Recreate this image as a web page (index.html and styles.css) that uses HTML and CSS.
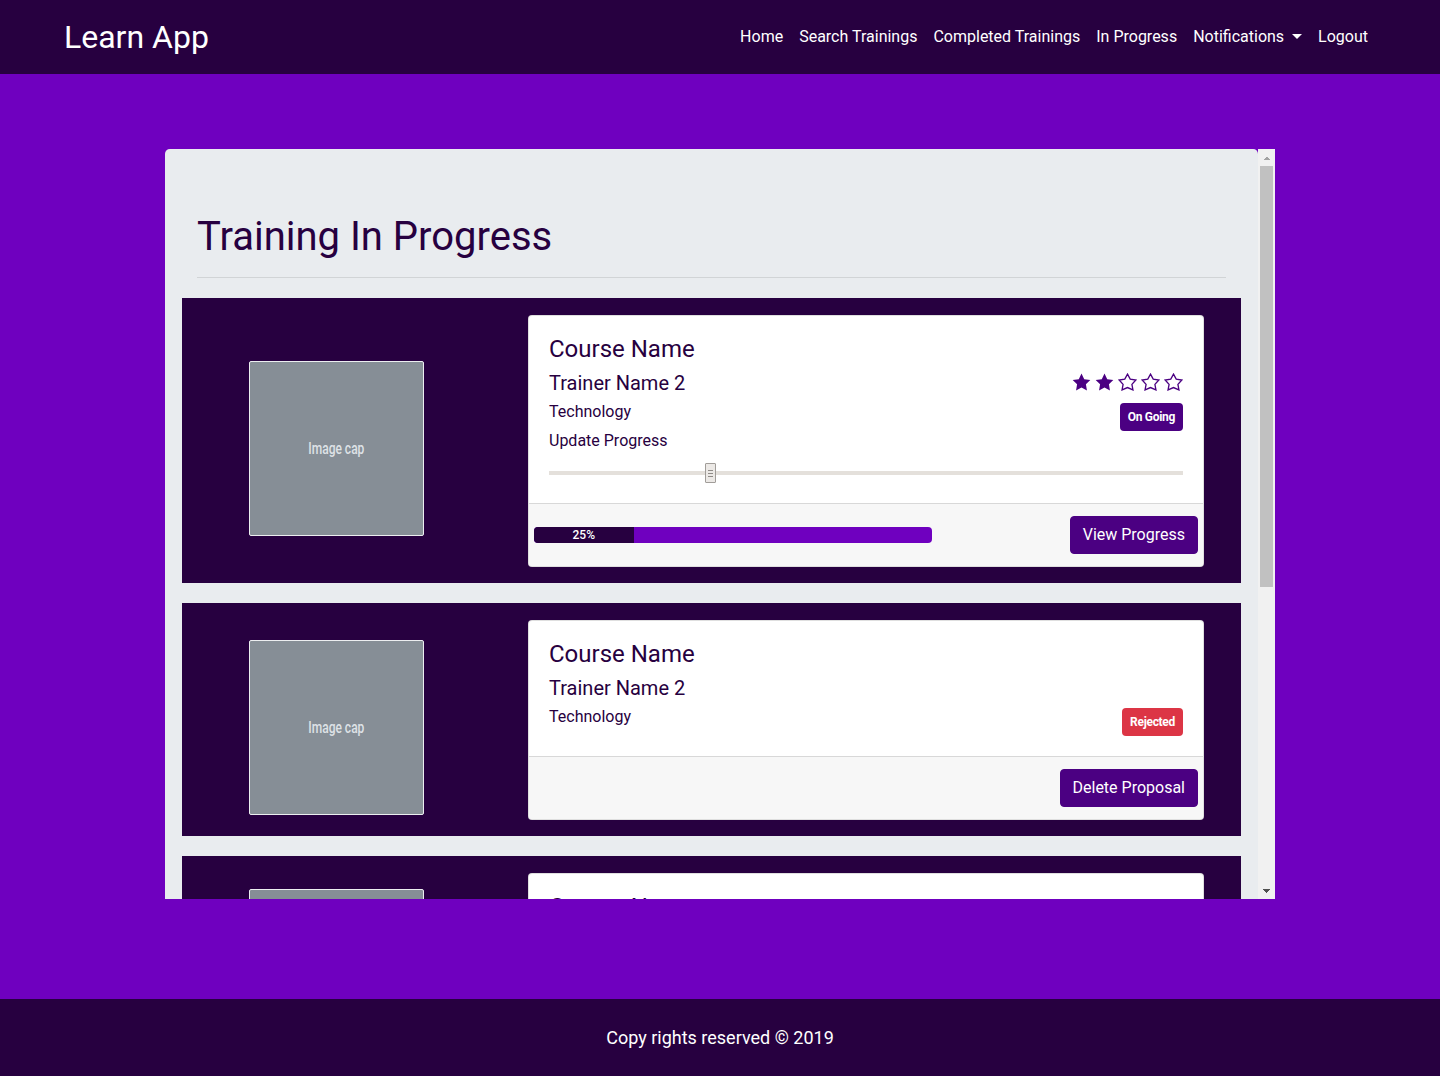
FILE: index.html
```html
<!DOCTYPE html>
<html lang="en">
<head>
<meta charset="utf-8">
<title>Learn App</title>
<link rel="stylesheet" href="styles.css">
</head>
<body>
<header class="navbar">
  <a class="brand" href="#">Learn App</a>
  <nav class="nav">
    <a class="nav-link" href="#">Home</a>
    <a class="nav-link" href="#">Search Trainings</a>
    <a class="nav-link" href="#">Completed Trainings</a>
    <a class="nav-link" href="#">In Progress</a>
    <a class="nav-link dropdown" href="#">Notifications<span class="caret"></span></a>
    <a class="nav-link" href="#">Logout</a>
  </nav>
</header>

<main class="page">
  <div class="scroller">
    <div class="viewport">
      <section class="jumbo">
        <h1 class="title">Training In Progress</h1>
        <hr class="rule">

        <div class="training">
          <div class="thumb-col"><div class="thumb"><span>Image cap</span></div></div>
          <div class="card">
            <div class="card-body">
              <div class="top">
                <div class="info">
                  <h4 class="course">Course Name</h4>
                  <h5 class="trainer">Trainer Name 2</h5>
                  <p class="line">Technology</p>
                  <p class="line">Update Progress</p>
                </div>
                <div class="side">
                  <div class="stars">
                    <svg class="star" viewBox="1.3 1.3 21.4 20.4"><polygon class="full" points="12,2 15.09,8.26 22,9.27 17,14.14 18.18,21.02 12,17.77 5.82,21.02 7,14.14 2,9.27 8.91,8.26"/></svg>
                    <svg class="star" viewBox="1.3 1.3 21.4 20.4"><polygon class="full" points="12,2 15.09,8.26 22,9.27 17,14.14 18.18,21.02 12,17.77 5.82,21.02 7,14.14 2,9.27 8.91,8.26"/></svg>
                    <svg class="star" viewBox="1.3 1.3 21.4 20.4"><polygon class="empty" points="12,2.6 15.09,8.26 21.4,9.27 17,14.14 18.18,20.5 12,17.77 5.82,20.5 7,14.14 2.6,9.27 8.91,8.26"/></svg>
                    <svg class="star" viewBox="1.3 1.3 21.4 20.4"><polygon class="empty" points="12,2.6 15.09,8.26 21.4,9.27 17,14.14 18.18,20.5 12,17.77 5.82,20.5 7,14.14 2.6,9.27 8.91,8.26"/></svg>
                    <svg class="star" viewBox="1.3 1.3 21.4 20.4"><polygon class="empty" points="12,2.6 15.09,8.26 21.4,9.27 17,14.14 18.18,20.5 12,17.77 5.82,20.5 7,14.14 2.6,9.27 8.91,8.26"/></svg>
                  </div>
                  <span class="badge badge-going">On Going</span>
                </div>
              </div>
              <div class="slider">
                <div class="track"></div>
                <div class="knob" style="left:25.5%"><i></i><i></i><i></i></div>
              </div>
            </div>
            <div class="card-footer">
              <div class="progress"><div class="bar" style="width:25%">25%</div></div>
              <button class="btn">View Progress</button>
            </div>
          </div>
        </div>

        <div class="training">
          <div class="thumb-col"><div class="thumb"><span>Image cap</span></div></div>
          <div class="card">
            <div class="card-body">
              <div class="top">
                <div class="info">
                  <h4 class="course">Course Name</h4>
                  <h5 class="trainer">Trainer Name 2</h5>
                  <p class="line">Technology</p>
                </div>
                <div class="side">
                  <div class="stars stars-hidden"></div>
                  <span class="badge badge-rejected">Rejected</span>
                </div>
              </div>
            </div>
            <div class="card-footer footer-end">
              <button class="btn">Delete Proposal</button>
            </div>
          </div>
        </div>

        <div class="training">
          <div class="thumb-col"><div class="thumb"><span>Image cap</span></div></div>
          <div class="card">
            <div class="card-body">
              <div class="top">
                <div class="info">
                  <h4 class="course">Course Name</h4>
                  <h5 class="trainer">Trainer Name 2</h5>
                  <p class="line">Technology</p>
                </div>
                <div class="side">
                  <div class="stars stars-hidden"></div>
                  <span class="badge badge-rejected">Rejected</span>
                </div>
              </div>
            </div>
            <div class="card-footer footer-end">
              <button class="btn btn-sm">Delete Proposal</button>
            </div>
          </div>
        </div>
      </section>
    </div>
    <div class="scrollbar" aria-hidden="true">
      <div class="sb-btn sb-up"></div>
      <div class="sb-track"><div class="sb-thumb"></div></div>
      <div class="sb-btn sb-down"></div>
    </div>
  </div>
</main>

<footer class="footer">Copy rights reserved © 2019</footer>
</body>
</html>
```

FILE: styles.css
```css
* { box-sizing: border-box; }

body {
  margin: 0;
  background: #6f00bf;
  font-family: Roboto, "Liberation Sans", Arial, sans-serif;
  color: #212529;
}

/* ---------- navbar ---------- */
.navbar {
  height: 74px;
  background: #270040;
  display: flex;
  align-items: center;
  justify-content: space-between;
  padding: 0 64px;
}
.brand {
  color: #fff;
  text-decoration: none;
  font-size: 32px;
  line-height: 38px;
  font-weight: 400;
}
.nav { display: flex; align-items: center; }
.nav-link {
  color: #fff;
  text-decoration: none;
  font-size: 16px;
  line-height: 24px;
  padding: 0 8px;
}
.caret {
  display: inline-block;
  margin-left: 8px;
  vertical-align: 3px;
  border-top: 5px solid #fff;
  border-left: 5px solid transparent;
  border-right: 5px solid transparent;
}

/* ---------- page ---------- */
.page { padding: 75px 0 100px; }
.scroller {
  width: 1110px;
  height: 750px;
  margin: 0 auto;
  display: flex;
}
.viewport {
  flex: 1;
  overflow: hidden;
}
.scrollbar {
  width: 17px;
  flex-shrink: 0;
  background: #f1f1f1;
  display: flex;
  flex-direction: column;
}
.sb-btn {
  height: 17px;
  flex-shrink: 0;
  background-repeat: no-repeat;
  background-size: 4px 4px;
}
.sb-up {
  background-image:
    linear-gradient(to top left, #a3a3a3 50%, transparent 50%),
    linear-gradient(to top right, #a3a3a3 50%, transparent 50%);
  background-position: 4.5px 6.5px, 8.5px 6.5px;
}
.sb-down {
  background-image:
    linear-gradient(to bottom left, #505050 50%, transparent 50%),
    linear-gradient(to bottom right, #505050 50%, transparent 50%);
  background-position: 4.5px 6.5px, 8.5px 6.5px;
}
.sb-track { flex: 1; padding: 0 2px; }
.sb-thumb {
  height: 421px;
  background: #c1c1c1;
}

.jumbo {
  background: #e9ecef;
  border-radius: 4.8px;
  padding: 64px 32px 32px;
}
.title {
  margin: 0;
  font-size: 40px;
  line-height: 48px;
  font-weight: 400;
  color: #270040;
}
.rule {
  margin: 16px 0 20px;
  border: 0;
  border-top: 1px solid rgba(0,0,0,.1);
}

/* ---------- training row ---------- */
.training {
  margin: 0 -15px 20px;
  background: #270040;
  display: flex;
  align-items: center;
  padding: 17px 37px 16px 0;
}
.training:last-child { margin-bottom: 0; }
.thumb-col {
  width: 309px;
  margin-right: 37px;
  margin-top: 14px;
  display: flex;
  justify-content: center;
  flex-shrink: 0;
}
.thumb {
  width: 175px;
  height: 175px;
  background: #868e96;
  border: 1px solid #eceef0;
  border-radius: 2px;
  color: #dee2e6;
  display: flex;
  align-items: center;
  justify-content: center;
}
.thumb span {
  display: inline-block;
  font-size: 16px;
  font-weight: 500;
  transform: scaleX(0.75);
}

/* ---------- card ---------- */
.card {
  flex: 1;
  background: #fff;
  border: 1px solid rgba(0,0,0,.125);
  border-radius: 4px;
  display: flex;
  flex-direction: column;
}
.card-body { padding: 20px; }
.top {
  display: flex;
  justify-content: space-between;
  align-items: flex-start;
}
.info { flex: 1; }
.course {
  margin: -1px 0 8px;
  font-size: 24px;
  line-height: 28px;
  font-weight: 400;
  color: #270040;
}
.trainer {
  margin: 0 0 5px;
  font-size: 20px;
  line-height: 24px;
  font-weight: 400;
  color: #270040;
}
.line {
  margin: 0 0 5px;
  font-size: 16px;
  line-height: 24px;
  color: #270040;
}
.info .line:last-child { margin-bottom: 0; }

.slider {
  position: relative;
  height: 20px;
  margin-top: 10px;
}
.track {
  position: absolute;
  left: 0; right: 0; top: 8px;
  height: 4px;
  background: #e4e0db;
}
.knob {
  position: absolute;
  top: 0;
  width: 11px;
  height: 20px;
  margin-left: -6px;
  background: #ece9e6;
  border: 1px solid #a19d99;
  border-radius: 1px;
  display: flex;
  flex-direction: column;
  align-items: center;
  justify-content: center;
  gap: 2px;
}
.knob i {
  display: block;
  width: 5px;
  height: 1px;
  background: #8f8b87;
}

.side {
  display: flex;
  flex-direction: column;
  align-items: flex-end;
  padding-top: 34px;
}
.stars {
  display: flex;
  gap: 4px;
  height: 24px;
  align-items: center;
}
.star { width: 19px; height: 18px; display: block; }
.star .full { fill: #4b0082; }
.star .empty { fill: #fff; stroke: #4b0082; stroke-width: 1.5; stroke-linejoin: miter; }
.stars-hidden { visibility: hidden; width: 111px; }

.badge {
  margin-top: 9px;
  display: inline-block;
  font-size: 12px;
  line-height: 14px;
  font-weight: 700;
  color: #fff;
  padding: 7px 8px;
  border-radius: 4px;
  letter-spacing: -0.3px;
}
.badge-going { background: #4b0082; }
.badge-rejected { background: #dc3545; }

.card-footer {
  background: #f7f7f7;
  border-top: 1px solid rgba(0,0,0,.125);
  border-radius: 0 0 4px 4px;
  padding: 12px 5px;
  display: flex;
  justify-content: space-between;
  align-items: center;
}
.footer-end { justify-content: flex-end; }

.progress {
  width: 398px;
  height: 16px;
  background: #6f00bf;
  border-radius: 4px;
  overflow: hidden;
  display: flex;
}
.bar {
  background: #270040;
  color: #fff;
  font-size: 12px;
  line-height: 16px;
  font-weight: 500;
  text-align: center;
}

.btn {
  font-family: inherit;
  font-size: 16px;
  line-height: 24px;
  color: #fff;
  background: #4b0082;
  border: 1px solid #4b0082;
  border-radius: 4px;
  padding: 6px 12px;
}
.btn-sm {
  font-size: 14px;
  line-height: 21px;
  padding: 4px 8px;
  border-radius: 3px;
}

/* ---------- footer ---------- */
.footer {
  height: 77px;
  background: #270040;
  color: #fff;
  font-size: 18px;
  display: flex;
  align-items: center;
  justify-content: center;
}
```
